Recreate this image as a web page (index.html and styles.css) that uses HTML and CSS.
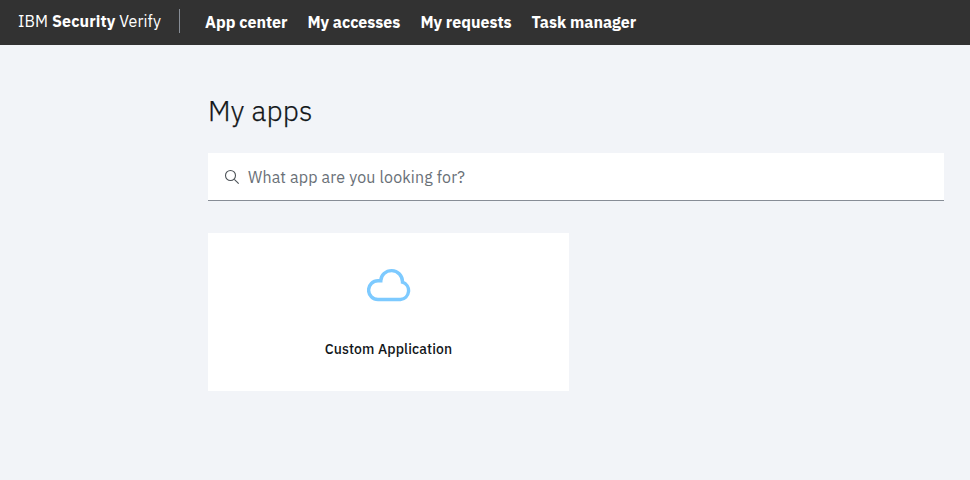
FILE: index.html
```html
<!DOCTYPE html>
<html lang="en">
<head>
<meta charset="utf-8">
<title>My apps</title>
<link rel="stylesheet" href="styles.css">
</head>
<body>
<header class="header">
  <div class="brand">IBM <b>Security</b> <span>Verify</span></div>
  <nav class="nav">
    <a>App center</a>
    <a>My accesses</a>
    <a>My requests</a>
    <a>Task manager</a>
  </nav>
</header>
<main class="main">
  <h1 class="title">My apps</h1>
  <div class="search">
    <svg class="search-icon" viewBox="0 0 16 16"><circle cx="6.500" cy="6.500" r="5"/><path d="M10.300 10.300 14.700 14.700"/></svg>
    <span class="placeholder">What app are you looking for?</span>
  </div>
  <div class="card">
    <svg class="cloud" viewBox="0 0 44 34"><path d="M11 31.500H33.500A8.900 8.900 0 0 0 35.500 14.200A10.700 11.300 0 0 0 24.700 2.600A10.900 10.300 0 0 0 13.800 12.700H11A9.400 9.400 0 0 0 11 31.500Z"/></svg>
    <span class="card-name">Custom Application</span>
  </div>
</main>
</body>
</html>
```
FILE: styles.css
```css
* { box-sizing: border-box; }
body { margin: 0; height: 480px; background: #f2f4f8; color: #121619; font-family: "IBM Plex Sans", "Noto Sans", sans-serif; overflow: hidden; }
.header { height: 45px; background: #323232; color: #fff; display: flex; align-items: center; padding-left: 18px; }
.brand { width: 162px; height: 24px; margin-bottom: 3px; line-height: 24px; border-right: 1px solid #878d96; font-size: 16px; letter-spacing: 0.1px; white-space: nowrap; }
.nav { display: flex; margin-left: 25px; margin-bottom: 2px; gap: 20px; font-size: 16px; line-height: 24px; font-weight: 700; white-space: nowrap; }
.main { width: 736px; margin-left: 208px; padding-top: 48px; }
.title { margin: 0; height: 60px; line-height: 36px; font-size: 28px; font-weight: 300; letter-spacing: 0.25px; -webkit-text-stroke: 0.25px currentColor; }
.search { height: 48px; background: #fff; border-bottom: 1px solid #878d96; display: flex; align-items: center; padding-left: 16px; }
.search-icon { width: 16px; height: 16px; fill: none; stroke: #4d5358; stroke-width: 1.1; margin-right: 8px; }
.placeholder { font-size: 16px; letter-spacing: 0.16px; color: #697077; white-space: nowrap; }
.card { width: 361px; height: 158px; margin-top: 32px; background: #fff; display: flex; flex-direction: column; align-items: center; padding-top: 35px; }
.cloud { width: 44px; height: 34px; fill: none; stroke: #7dcaff; stroke-width: 3.400; }
.card-name { margin-top: 37px; font-size: 14px; line-height: 20px; font-weight: 500; letter-spacing: 0.1px; white-space: nowrap; }
```
